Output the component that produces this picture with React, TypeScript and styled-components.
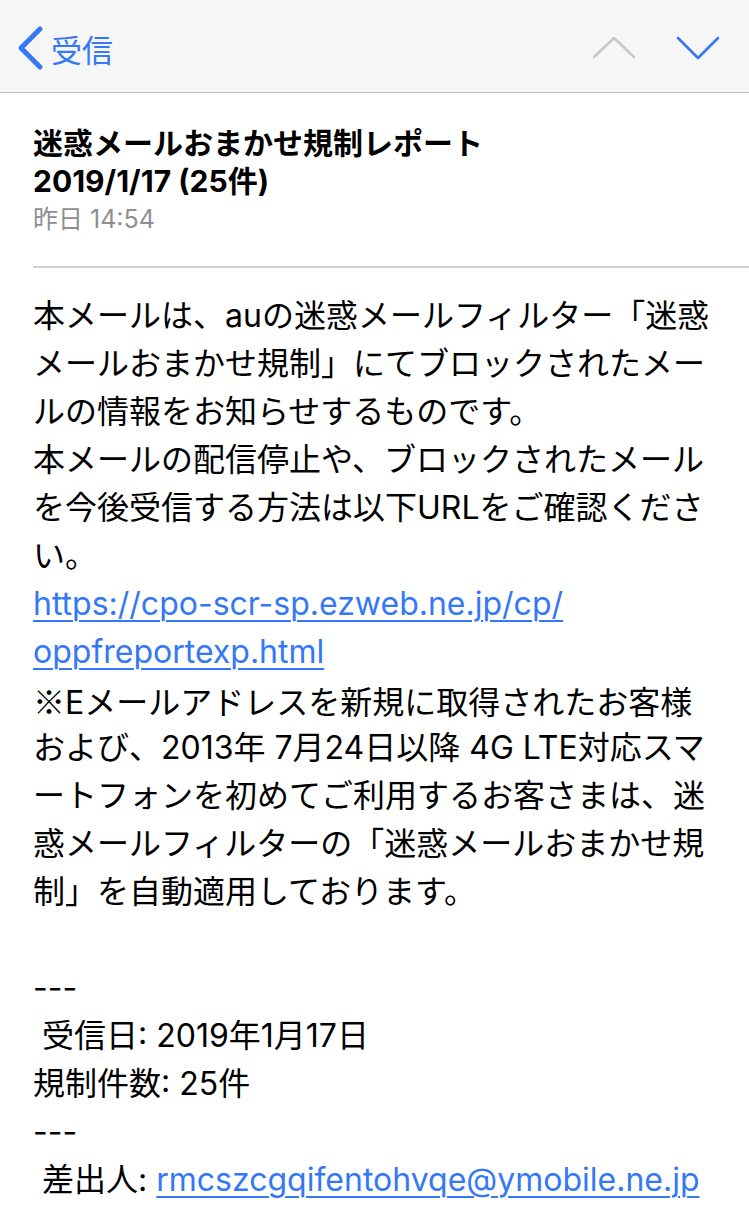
import React from "react";
import styled, { createGlobalStyle } from "styled-components";

const GlobalStyle = createGlobalStyle`
  html, body {
    margin: 0;
    padding: 0;
    background: #ffffff;
  }
  body {
    font-family: "Inter", "Noto Sans CJK JP", sans-serif;
    -webkit-font-smoothing: antialiased;
  }
`;

const Page = styled.div`
  width: 749px;
  min-height: 1209px;
  overflow: hidden;
  background: #ffffff;
`;

const NavBar = styled.div`
  height: 93px;
  box-sizing: border-box;
  background: #f6f6f7;
  border-bottom: 1.5px solid #b9b9bc;
  display: flex;
  align-items: center;
  justify-content: space-between;
  padding: 0 29px 0 16px;
`;

const BackButton = styled.div`
  display: flex;
  align-items: center;
  gap: 7px;
  color: #3478f6;
  font-family: "Noto Sans CJK JP", sans-serif;
  font-size: 31px;
  margin-top: 4px;
`;

const Arrows = styled.div`
  display: flex;
  align-items: center;
  gap: 40px;
  margin-top: 4px;
`;

const Header = styled.div`
  padding: 31px 0 0 33px;
`;

const Subject = styled.div`
  font-size: 30px;
  font-weight: 700;
  line-height: 38px;
  color: #000;
`;

const DateLine = styled.div`
  font-size: 25px;
  line-height: 36px;
  color: #8e8e93;
  margin-top: 1px;
`;

const Divider = styled.div`
  margin: 29px 0 0 33px;
  height: 1.5px;
  background: #cfcfd2;
`;

const Body = styled.div`
  padding: 24px 0 40px 33px;
  font-size: 32px;
  line-height: 48px;
  color: #000;
  white-space: nowrap;
`;

const Line = styled.div`
  height: 48px;
`;

const Cjk = styled.span`
  font-family: "Noto Sans CJK JP", sans-serif;
`;

const Link = styled.a`
  color: #3478f6;
  text-decoration: underline;
  text-decoration-thickness: 1.5px;
  text-underline-offset: 5px;
`;

const Chevron = ({ d, color, width }: { d: string; color: string; width: number }) => (
  <svg width="44" height="44" viewBox="0 0 44 44" fill="none">
    <path d={d} stroke={color} strokeWidth={width} strokeLinecap="round" strokeLinejoin="round" />
  </svg>
);

const bodyLines = [
  "本メールは、auの迷惑メールフィルター「迷惑",
  "メールおまかせ規制」にてブロックされたメー",
  "ルの情報をお知らせするものです。",
  "本メールの配信停止や、ブロックされたメール",
  "を今後受信する方法は以下URLをご確認くださ",
  "い。",
];

const noteLines = [
  "および、2013年 7月24日以降 4G LTE対応スマ",
  "ートフォンを初めてご利用するお客さまは、迷",
  "惑メールフィルターの「迷惑メールおまかせ規",
  "制」を自動適用しております。",
];

export default function App() {
  return (
    <Page>
      <GlobalStyle />
      <NavBar>
        <BackButton>
          <svg width="28" height="46" viewBox="0 0 28 46" fill="none">
            <path d="M24 4 L5 23 L24 42" stroke="#3478f6" strokeWidth="5" strokeLinecap="round" strokeLinejoin="round" />
          </svg>
          <span>受信</span>
        </BackButton>
        <Arrows>
          <Chevron d="M2 31 L22 12 L42 31" color="#c7c7cc" width={2.6} />
          <Chevron d="M2 12 L22 32 L42 12" color="#3478f6" width={2.6} />
        </Arrows>
      </NavBar>

      <Header>
        <Subject>
          迷惑メールおまかせ規制レポート
          <br />
          2019/1/17 (25件)
        </Subject>
        <DateLine>昨日 14:54</DateLine>
      </Header>
      <Divider />

      <Body>
        {bodyLines.map((l, i) => (
          <Line key={"b" + i}>{l}</Line>
        ))}
        <Line>
          <Link href="#">https://cpo-scr-sp.ezweb.ne.jp/cp/</Link>
        </Line>
        <Line>
          <Link href="#">oppfreportexp.html</Link>
        </Line>
        <Line>
          <Cjk>※</Cjk>Eメールアドレスを新規に取得されたお客様
        </Line>
        {noteLines.map((l, i) => (
          <Line key={"n" + i}>{l}</Line>
        ))}
        <Line />
        <Line>---</Line>
        <Line>&nbsp;受信日: 2019年1月17日</Line>
        <Line>規制件数: 25件</Line>
        <Line>---</Line>
        <Line>
          &nbsp;差出人: <Link href="#">rmcszcgqifentohvqe@ymobile.ne.jp</Link>
        </Line>
      </Body>
    </Page>
  );
}
